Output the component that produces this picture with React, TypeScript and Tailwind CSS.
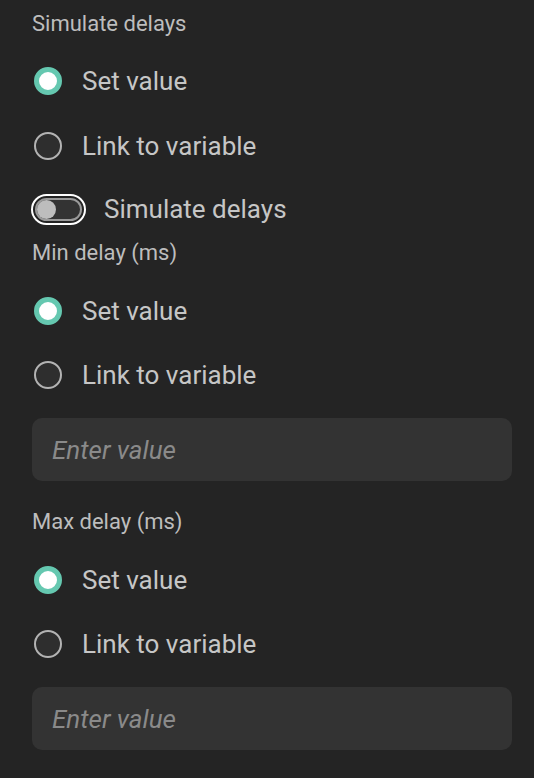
import React from "react";

function Radio({ selected, label }: { selected: boolean; label: string }) {
  return (
    <div className="flex items-center h-[64px]">
      {selected ? (
        <div className="ml-[2px] w-[28px] h-[28px] rounded-full border-[5px] border-[#65c8b0] bg-white" />
      ) : (
        <div className="ml-[2px] w-[28px] h-[28px] rounded-full border-2 border-[#b3b3b3] bg-[#2e2e2e]" />
      )}
      <span className="ml-[20px] text-[26px] text-[#c6c6c6] leading-none">{label}</span>
    </div>
  );
}

function Label({ text, className = "" }: { text: string; className?: string }) {
  return (
    <div className={"h-[32px] leading-[32px] text-[22px] text-[#bdbdbd] " + className}>{text}</div>
  );
}

function Input() {
  return (
    <div className="h-[63px] w-full rounded-[10px] bg-[#333333] flex items-center pl-[20px]">
      <span className="text-[26px] italic text-[#8a8a8a] leading-none">Enter value</span>
    </div>
  );
}

export default function App() {
  return (
    <div
      className="w-[534px] h-[778px] bg-[#242424] pt-[8px] pl-[32px] pr-[22px] overflow-hidden"
      style={{ fontFamily: "Roboto, 'Noto Sans', sans-serif" }}
    >
      <Label text="Simulate delays" />
      <div className="mt-[9px]">
        <Radio selected label="Set value" />
        <div className="mt-[1px]">
          <Radio selected={false} label="Link to variable" />
        </div>
      </div>
      <div className="mt-[12px] h-[38px] flex items-center">
        <div className="ml-[-1px] w-[55px] h-[31px] rounded-full border-2 border-white p-[2px]">
          <div className="w-full h-full rounded-full border-2 border-[#9a9a9a] bg-[#333333] flex items-center">
            <div className="w-[19px] h-[19px] rounded-full bg-[#bdbdbd]" />
          </div>
        </div>
        <span className="ml-[18px] text-[26px] text-[#c6c6c6] leading-none">Simulate delays</span>
      </div>
      <Label text="Min delay (ms)" className="mt-[9px]" />
      <div className="mt-[10px]">
        <Radio selected label="Set value" />
        <Radio selected={false} label="Link to variable" />
      </div>
      <div className="mt-[11px]">
        <Input />
      </div>
      <Label text="Max delay (ms)" className="mt-[25px]" />
      <div className="mt-[10px]">
        <Radio selected label="Set value" />
        <Radio selected={false} label="Link to variable" />
      </div>
      <div className="mt-[11px]">
        <Input />
      </div>
    </div>
  );
}
